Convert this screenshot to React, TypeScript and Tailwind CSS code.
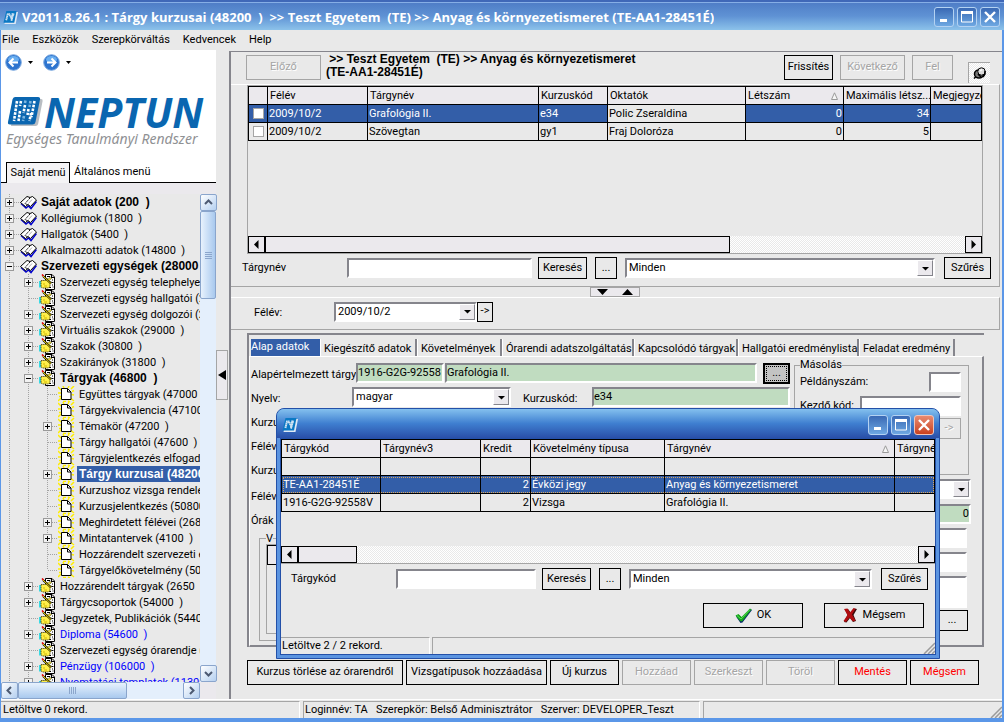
import React, { useState } from "react";

type TreeRow = {
  level: 0 | 1 | 2;
  label: string;
  toggle?: "+" | "-";
  bold?: boolean;
  blue?: boolean;
  selected?: boolean;
  last?: boolean;
};

const treeRows: TreeRow[] = [
  { level: 0, label: "Saját adatok (200  )", toggle: "+", bold: true },
  { level: 0, label: "Kollégiumok (1800  )", toggle: "+" },
  { level: 0, label: "Hallgatók (5400  )", toggle: "+" },
  { level: 0, label: "Alkalmazotti adatok (14800  )", toggle: "+" },
  { level: 0, label: "Szervezeti egységek (28000", toggle: "-", bold: true },
  { level: 1, label: "Szervezeti egység telephelyei", toggle: "+" },
  { level: 1, label: "Szervezeti egység hallgatói (2" },
  { level: 1, label: "Szervezeti egység dolgozói (2", toggle: "+" },
  { level: 1, label: "Virtuális szakok (29000  )", toggle: "+" },
  { level: 1, label: "Szakok (30800  )", toggle: "+" },
  { level: 1, label: "Szakirányok (31800  )", toggle: "+" },
  { level: 1, label: "Tárgyak (46800  )", toggle: "-", bold: true },
  { level: 2, label: "Együttes tárgyak (47000" },
  { level: 2, label: "Tárgyekvivalencia (47100" },
  { level: 2, label: "Témakör (47200  )", toggle: "+" },
  { level: 2, label: "Tárgy hallgatói (47600  )" },
  { level: 2, label: "Tárgyjelentkezés elfogadá" },
  { level: 2, label: "Tárgy kurzusai (48200", toggle: "+", bold: true, selected: true },
  { level: 2, label: "Kurzushoz vizsga rendelé" },
  { level: 2, label: "Kurzusjelentkezés (50800" },
  { level: 2, label: "Meghirdetett félévei (2684", toggle: "+" },
  { level: 2, label: "Mintatantervek (4100  )", toggle: "+" },
  { level: 2, label: "Hozzárendelt szervezeti e" },
  { level: 2, label: "Tárgyelőkövetelmény (50", last: true },
  { level: 1, label: "Hozzárendelt tárgyak (2650  )", toggle: "+" },
  { level: 1, label: "Tárgycsoportok (54000  )", toggle: "+" },
  { level: 1, label: "Jegyzetek, Publikációk (5440" },
  { level: 1, label: "Diploma (54600  )", toggle: "+", blue: true },
  { level: 1, label: "Szervezeti egység órarendje (" },
  { level: 1, label: "Pénzügy (106000  )", toggle: "+", blue: true },
  { level: 1, label: "Nyomtatási templatek (113000", toggle: "+", blue: true },
];

const dither = "bg-[repeating-conic-gradient(#e9e9e9_0_25%,#ffffff_0_50%)] bg-[length:2px_2px]";
const sunken = "border-2 border-t-[#85858c] border-l-[#85858c] border-r-white border-b-white";

/* ---------- drawings ---------- */

function AppIcon({ size }: { size: number }) {
  return (
    <svg width={size} height={size} viewBox="0 0 16 16" aria-hidden="true">
      <path d="M4.500 2h11.500l-2.500 13H1.500z" fill="#dfe9f5" />
      <path d="M3.500 1h11l-2.500 12.500H.5z" fill="#0b79c4" />
      <path d="M3.400 11 5 4.500h1.800l2.200 4.500 1-4.500h2" fill="none" stroke="#cfe2f3" strokeWidth="2" strokeDasharray="1.500 .3" />
      <path d="M9 11.500 11 4" stroke="#cfe2f3" strokeWidth="2" strokeDasharray="1.500 .3" />
    </svg>
  );
}

function LogoMark() {
  return (
    <svg width="38" height="32" viewBox="0 0 38 32" className="shrink-0" aria-hidden="true">
      <path d="M9 3h26q2 0 1.600 2l-4.500 23q-.5 2-2.500 2H5z" fill="#b9bdc2" />
      <path d="M9 1h23q2.500 0 2 2.500L29.500 26q-.5 2.500-3 2.500H4Q1.500 28.500 2 26L6.500 3.500Q7 1 9 1z" fill="#0a66b0" />
      <path
        d="M11 5 8 25M15 5l-1 5M14 15l-1.500 10M19 9l-1.500 8M22.500 13l-1 6M25 17l-1.500 8M28.500 5l-3 16"
        stroke="#fff"
        strokeWidth="2.600"
        strokeDasharray="2.600 1.200"
      />
      <path d="M19.500 4.500 19 7M24.500 5l-1 6M18 20l-1 5" stroke="#7db6e0" strokeWidth="2.600" strokeDasharray="2.600 1.200" />
    </svg>
  );
}

function RoundArrow({ back }: { back?: boolean }) {
  return (
    <svg width="17" height="17" viewBox="0 0 17 17" aria-hidden="true">
      <circle cx="8.500" cy="8.500" r="7.800" fill="#2d74cf" stroke="#7aa7de" />
      <ellipse cx="8.500" cy="5.500" rx="5.500" ry="3.500" fill="#69aef0" />
      <path d={back ? "M13 8.500H5M8.500 4.500l-4 4 4 4" : "M4 8.500h8M8.500 4.500l4 4-4 4"} fill="none" stroke="#fff" strokeWidth="2" />
    </svg>
  );
}

function Tri({ dir }: { dir: "down" | "up" | "left" | "right" }) {
  const paths = {
    down: "M1 3h7L4.500 6.500z",
    up: "M1 6.500h7L4.500 3z",
    left: "M6.500 0v9L2 4.500z",
    right: "M2.500 0v9L7 4.500z",
  };
  return (
    <svg width="9" height="9" viewBox="0 0 9 9" aria-hidden="true">
      <path d={paths[dir]} fill="#000" />
    </svg>
  );
}

function MenuMark() {
  return (
    <svg width="5" height="3" viewBox="0 0 5 3" className="ml-[6px]" aria-hidden="true">
      <path d="M0 0h5L2.500 3z" />
    </svg>
  );
}

function SortMark() {
  return (
    <svg width="7" height="8" viewBox="0 0 7 8" className="mr-[5px] shrink-0" aria-hidden="true">
      <path d="M.5 7.500h6L3.500.8z" fill="#f6f6f6" stroke="#9a9a9a" />
    </svg>
  );
}

function BookIcon() {
  return (
    <svg width="17" height="16" viewBox="0 0 17 16" aria-hidden="true">
      <path d="M1 9.500l5 4.500 2.500-2 2.500 2.500 5.500-7" fill="none" stroke="#0000c8" strokeWidth="1.500" />
      <path d="M.5 8.500 7 2.500l3 1 2.500-1 4 3.500-6 6.500L8 10.500 5.500 12.500z" fill="#fff" stroke="#000" />
      <path d="M10 4 5 9.500l3 1.500" stroke="#000" fill="none" strokeDasharray="1.500 .7" />
      <path d="M12 5.500 8.500 9.500" stroke="#9a9a9a" strokeWidth=".8" />
    </svg>
  );
}

function HandIcon() {
  return (
    <svg width="17" height="16" viewBox="0 0 17 16" aria-hidden="true">
      <path d="M6.500.5h6.500l2.500 2.500v12.500h-9z" fill="#fff" stroke="#000" />
      <path d="M12.500.5v3h3M8 2.500h3M13 6h1M12.500 8.500h2M13 11h1M10 13.500h2M13.500 13h1" stroke="#000" strokeWidth="1.200" fill="none" />
      <path d="M1 7v6.500" stroke="#00d5e0" strokeWidth="1.500" />
      <path d="M2 6.500h4l5-3 1.500 1L9 7.500h3V9.500h-1V13l-2 1H4l-2-1z" fill="#fff04a" stroke="#3d3700" strokeWidth=".8" strokeDasharray="1.500 .6" />
      <path d="M4 10h2M5 12h3" stroke="#d0b800" />
      <path d="M4 2 12 9.500" stroke="#000" strokeWidth="1.800" />
      <path d="M4 2 12 9.500" stroke="#ffe600" strokeWidth="1" />
      <path d="M3 .5 4.500 2" stroke="#e00000" strokeWidth="1.600" />
    </svg>
  );
}

function PageIcon() {
  return (
    <svg width="17" height="16" viewBox="0 0 17 16" aria-hidden="true">
      <path
        d="M0 1l3 3M5 0l1 2M16 0l-3 3M0 7h3M1 10.500h2M0 15l3-3M13.500 8.500 16 9M16 15l-3-2.500M5 15.500h3M10 15l2 1M11 0l-1 2M14 5.500l2-1"
        stroke="#ffee00"
        strokeWidth="1.500"
      />
      <path d="M3.500 2.500h6l3.500 3.500v7.500H3.500z" fill="#fff" stroke="#000" />
      <path d="M9.500 2.500V6H13" fill="none" stroke="#000" />
    </svg>
  );
}

function TreeBranch({ toggle, half, through }: { toggle?: "+" | "-"; half?: boolean; through?: boolean }) {
  return (
    <svg width="19" height="16" viewBox="0 0 19 16" className="shrink-0" aria-hidden="true">
      <path d={half ? "M8.500 0v8" : "M8.500 0v16"} stroke="#a3a3a3" strokeDasharray="1 1" />
      {!through && <path d="M9 8.500h10" stroke="#a3a3a3" strokeDasharray="1 1" />}
      {toggle && (
        <>
          <rect x="4.500" y="4.500" width="8" height="8" fill="#f2f2f2" stroke="#9a9a9a" />
          <path d={toggle === "+" ? "M6 8.500h5M8.500 6v5" : "M6 8.500h5"} stroke="#000" />
        </>
      )}
    </svg>
  );
}

function PinIcon() {
  return (
    <svg width="14" height="14" viewBox="0 0 14 14" aria-hidden="true">
      <ellipse cx="6" cy="8" rx="4.500" ry="4" fill="#777" stroke="#000" strokeWidth="1.500" />
      <circle cx="8.500" cy="5.500" r="3.700" fill="#ddd" stroke="#000" />
      <path d="M3 10.500 1 12.500M5 8l3 3M12 5v3l-2 3" stroke="#000" strokeWidth="1.500" fill="none" />
      <path d="M7 5l2-1.500" stroke="#fff" strokeWidth="1.500" />
    </svg>
  );
}

function CheckIcon() {
  return (
    <svg width="17" height="15" viewBox="0 0 17 15" aria-hidden="true">
      <path d="M1 8.500 4 7l3 3 8.500-9L17 2 7.500 14.500 5.500 15z" fill="#0a2a6a" />
      <path d="M.5 7.500 3.500 6l3 3L15 .5l1.500 1-9.500 12-2-.5z" fill="#14a81c" />
      <path d="M2 7.500 6 11 14.500 2" stroke="#5fe05a" strokeWidth=".9" fill="none" />
    </svg>
  );
}

function CrossIcon() {
  return (
    <svg width="14" height="15" viewBox="0 0 14 15" aria-hidden="true">
      <path d="M2 1.500 5 1l3 4 3.500-4.500L14 1l-3.500 6L13 13l-3 1-3-4-3.500 4.500L1 14l3.500-7z" fill="#3a0a0a" />
      <path d="M1 1l3.500-.5L7 4.500 10.500 0l2 .8L9 6.500l3.500 6-2.500 1L6.500 9.500 3 14l-2.500-1 4-6z" fill="#b00d10" />
    </svg>
  );
}

function Grip() {
  return (
    <svg width="12" height="12" viewBox="0 0 12 12" className="self-end" aria-hidden="true">
      <path d="M1 12 12 1M5 12l7-7M9 12l3-3" stroke="#9b9b9b" strokeWidth="1.500" />
    </svg>
  );
}

/* ---------- controls ---------- */

function PlainButton({
  children,
  className = "",
  disabled,
}: {
  children: React.ReactNode;
  className?: string;
  disabled?: boolean;
}) {
  return (
    <button
      type="button"
      disabled={disabled}
      className={`flex shrink-0 items-center justify-center border whitespace-nowrap ${
        disabled ? "border-[#a5a5a5] text-[#a5a5a5] [text-shadow:1px_1px_0_#fff]" : "border-black"
      } ${className}`}
    >
      {children}
    </button>
  );
}

function Combo({ id, label, value, className = "" }: { id: string; label?: string; value: string; className?: string }) {
  return (
    <div className={`flex h-5 bg-white ${sunken} ${className}`}>
      <select id={id} aria-label={label} className="min-w-0 flex-1 appearance-none bg-white pl-[2px] leading-4 outline-none">
        <option>{value}</option>
      </select>
      <span className="pointer-events-none flex w-4 items-center justify-center border border-t-white border-r-[#85858c] border-b-[#85858c] border-l-white bg-[#ebe9ed]">
        <Tri dir="down" />
      </span>
    </div>
  );
}

function Field({
  id,
  label,
  value = "",
  green,
  className = "",
}: {
  id?: string;
  label?: string;
  value?: string;
  green?: boolean;
  className?: string;
}) {
  return (
    <input
      id={id}
      aria-label={label}
      defaultValue={value}
      readOnly={green}
      className={`h-5 min-w-0 pb-[2px] outline-none ${sunken} ${green ? "bg-[#c0dcc0]" : "bg-white"} ${className}`}
    />
  );
}

function FlatScroll({ thumb }: { thumb: string }) {
  return (
    <div className={`flex h-[17px] shrink-0 ${dither}`}>
      <button type="button" aria-label="Balra" className="flex w-[17px] items-center justify-center border border-black bg-[#ebe9ed]">
        <Tri dir="left" />
      </button>
      <div className={`-ml-px border border-l-2 border-black bg-[#ebe9ed] ${thumb}`} />
      <div className="flex-1" />
      <button type="button" aria-label="Jobbra" className="flex w-[17px] items-center justify-center border border-black bg-[#ebe9ed]">
        <Tri dir="right" />
      </button>
    </div>
  );
}

function XpScrollButton({ d, label }: { d: string; label: string }) {
  return (
    <button
      type="button"
      aria-label={label}
      className="flex size-[17px] shrink-0 items-center justify-center rounded-[2px] border border-[#8aa5cc] bg-linear-to-br from-white to-[#b5d0f0]"
    >
      <svg width="9" height="9" viewBox="0 0 9 9" aria-hidden="true">
        <path d={d} fill="none" stroke="#4d5a72" strokeWidth="2" />
      </svg>
    </button>
  );
}

const captionButton = "flex size-5 items-center justify-center rounded-[3px] border";

function WindowButtons() {
  return (
    <div className="flex gap-[3px]">
      <button type="button" aria-label="Kis méret" className={`${captionButton} border-[#b4d2f2] bg-linear-to-b from-[#3a69b4] to-[#6ea8e2]`}>
        <svg width="12" height="12" aria-hidden="true">
          <path d="M2 9.500h7" stroke="#fff" strokeWidth="3" />
        </svg>
      </button>
      <button type="button" aria-label="Teljes méret" className={`${captionButton} border-[#b4d2f2] bg-linear-to-b from-[#3a69b4] to-[#6ea8e2]`}>
        <svg width="12" height="12" aria-hidden="true">
          <path d="M.5 1v10h11V1" stroke="#fff" fill="none" />
          <path d="M0 1.500h12" stroke="#fff" strokeWidth="3" />
        </svg>
      </button>
    </div>
  );
}

function CloseButton({ red }: { red?: boolean }) {
  return (
    <button
      type="button"
      aria-label="Bezárás"
      className={`${captionButton} bg-linear-to-b ${
        red ? "border-[#f0c4b8] from-[#e88a70] to-[#c8401c]" : "border-[#b4d2f2] from-[#3a69b4] to-[#6ea8e2]"
      }`}
    >
      <svg width="12" height="12" aria-hidden="true">
        <path d="M1 1l10 10M11 1 1 11" stroke="#fff" strokeWidth="2.400" />
      </svg>
    </button>
  );
}

/* ---------- data tables ---------- */

const th = "h-[18px] overflow-hidden border border-black bg-[#ebe9ed] py-0 pr-0 pl-[2px] text-left font-normal whitespace-nowrap";
const td = "h-[18px] overflow-hidden border border-black px-px py-0 whitespace-nowrap";

function CourseTable() {
  const rows = [
    { term: "2009/10/2", name: "Grafológia II.", code: "e34", teacher: "Polic Zseraldina", count: "0", max: "34", on: true },
    { term: "2009/10/2", name: "Szövegtan", code: "gy1", teacher: "Fraj Doloróza", count: "0", max: "5", on: false },
  ];
  return (
    <table className="w-full table-fixed border-collapse leading-4">
      <colgroup>
        <col className="w-[19px]" />
        <col className="w-[100px]" />
        <col className="w-[171px]" />
        <col className="w-[69px]" />
        <col className="w-[138px]" />
        <col className="w-[98px]" />
        <col className="w-[87px]" />
        <col />
      </colgroup>
      <thead>
        <tr>
          <th className={th} aria-label="Kijelölés" />
          <th className={th}>Félév</th>
          <th className={th}>Tárgynév</th>
          <th className={th}>Kurzuskód</th>
          <th className={th}>Oktatók</th>
          <th className={th}>
            <span className="flex items-center justify-between">
              Létszám
              <SortMark />
            </span>
          </th>
          <th className={th}>Maximális létsz...</th>
          <th className={th}>Megjegyzé</th>
        </tr>
      </thead>
      <tbody>
        {rows.map((r) => (
          <tr key={r.code} className={r.on ? "bg-[#335ea8] text-white" : ""}>
            <td className={td}>
              <input
                type="checkbox"
                aria-label={r.name}
                className="mx-auto block size-[11px] appearance-none border border-[#a5a5a5] bg-white"
              />
            </td>
            <td className={td}>{r.term}</td>
            <td className={td}>{r.name}</td>
            <td className={td}>{r.code}</td>
            <td className={`${td} bg-[#e9e9e9] text-black`}>{r.teacher}</td>
            <td className={`${td} text-right`}>{r.count}</td>
            <td className={`${td} text-right`}>{r.max}</td>
            <td className={td} />
          </tr>
        ))}
      </tbody>
    </table>
  );
}

function SubjectTable() {
  const rows = [
    { code: "TE-AA1-28451É", credit: "2", kind: "Évközi jegy", name: "Anyag és környezetismeret", on: true },
    { code: "1916-G2G-92558V", credit: "2", kind: "Vizsga", name: "Grafológia II.", on: false },
  ];
  return (
    <table className="w-full table-fixed border-collapse leading-4">
      <colgroup>
        <col className="w-[99px]" />
        <col className="w-[100px]" />
        <col className="w-[50px]" />
        <col className="w-[134px]" />
        <col className="w-[230px]" />
        <col />
      </colgroup>
      <thead>
        <tr>
          <th className={th}>Tárgykód</th>
          <th className={th}>Tárgynév3</th>
          <th className={th}>Kredit</th>
          <th className={th}>Követelmény típusa</th>
          <th className={th}>
            <span className="flex items-center justify-between">
              Tárgynév
              <SortMark />
            </span>
          </th>
          <th className={th}>Tárgyné</th>
        </tr>
      </thead>
      <tbody>
        <tr>
          <td className={td} />
          <td className={td} />
          <td className={td} />
          <td className={td} />
          <td className={td} />
          <td className={td} />
        </tr>
        {rows.map((r) => (
          <tr
            key={r.code}
            className={r.on ? "bg-[#335ea8] text-white outline-1 -outline-offset-2 outline-dotted outline-[#d8a860]" : ""}
          >
            <td className={td}>{r.code}</td>
            <td className={td} />
            <td className={`${td} text-right`}>{r.credit}</td>
            <td className={td}>{r.kind}</td>
            <td className={td}>{r.name}</td>
            <td className={td} />
          </tr>
        ))}
      </tbody>
    </table>
  );
}

/* ---------- panels ---------- */

function Tree() {
  return (
    <div className="flex min-h-0 flex-1 flex-col pt-[11px]">
      <div className="flex min-h-0 flex-1 bg-[#e9e9e9]">
        <ul className="min-w-0 flex-1 overflow-hidden">
          {treeRows.map((r) => (
            <li key={r.label} className="flex h-4 items-center overflow-hidden">
              {r.level > 0 && <TreeBranch through />}
              {r.level > 1 && <TreeBranch through />}
              <TreeBranch toggle={r.toggle} half={r.last} />
              <span className="w-[19px] shrink-0">
                {r.level === 0 ? <BookIcon /> : r.level === 1 ? <HandIcon /> : <PageIcon />}
              </span>
              <span
                className={`h-4 pl-[2px] whitespace-pre ${
                  r.bold ? "font-['Liberation_Sans',sans-serif] text-xs leading-4 font-bold" : "leading-[18px]"
                } ${r.blue ? "text-[#0000ff]" : ""} ${r.selected ? "bg-[#335ea8] text-white" : ""}`}
              >
                {r.label}
              </span>
            </li>
          ))}
        </ul>
        <div className="flex w-4 shrink-0 flex-col items-center bg-[#e4effc]">
          <XpScrollButton label="Fel" d="M1 6l3.500-3.500L8 6" />
          <div className="flex h-[88px] w-4 flex-col items-center justify-center gap-[1px] rounded-[2px] border border-[#8aa5cc] bg-linear-to-r from-[#e8f2fd] to-[#a9c9ee]">
            <span className="h-px w-[7px] bg-[#8ba6cc]" />
            <span className="h-px w-[7px] bg-[#8ba6cc]" />
            <span className="h-px w-[7px] bg-[#8ba6cc]" />
            <span className="h-px w-[7px] bg-[#8ba6cc]" />
          </div>
          <div className="flex-1" />
          <XpScrollButton label="Le" d="M1 3l3.500 3.500L8 3" />
        </div>
      </div>
      <div className="mr-4 flex h-[17px] shrink-0 bg-[#e4effc]">
        <XpScrollButton label="Balra" d="M6 1 2.500 4.500 6 8" />
        <div className="flex w-[109px] items-center justify-center gap-[1px] rounded-[2px] border border-[#8aa5cc] bg-linear-to-b from-[#e8f2fd] to-[#a9c9ee]">
          <span className="h-[7px] w-px bg-[#8ba6cc]" />
          <span className="h-[7px] w-px bg-[#8ba6cc]" />
          <span className="h-[7px] w-px bg-[#8ba6cc]" />
          <span className="h-[7px] w-px bg-[#8ba6cc]" />
        </div>
        <div className="flex-1" />
        <XpScrollButton label="Jobbra" d="M3 1l3.500 3.500L3 8" />
      </div>
    </div>
  );
}

function Sidebar() {
  return (
    <aside className="flex w-[215px] shrink-0 flex-col bg-[#ebe9ed]">
      <div className="bg-white">
        <div className="flex h-6 items-center pl-1">
          <button type="button" aria-label="Vissza">
            <RoundArrow back />
          </button>
          <MenuMark />
          <button type="button" aria-label="Előre" className="ml-[10px]">
            <RoundArrow />
          </button>
          <MenuMark />
        </div>
        <div className="mt-5 flex h-9 items-center pl-[5px]">
          <LogoMark />
          <span className="font-['Open_Sans',sans-serif] text-[41px] leading-9 font-bold text-[#0a66b0] italic">NEPTUN</span>
        </div>
        <div className="mt-px h-[31px] pl-[5px] font-['Noto_Sans',sans-serif] text-sm leading-4 whitespace-nowrap text-[#8f9194] italic">
          Egységes Tanulmányi Rendszer
        </div>
        <div className="flex h-[21px]" role="tablist">
          <span className="w-[5px] border-b border-black" />
          <button
            type="button"
            role="tab"
            aria-selected="true"
            className="w-16 border border-b-0 border-black bg-[#f4f3f5] whitespace-nowrap"
          >
            Saját menü
          </button>
          <button type="button" role="tab" aria-selected="false" className="flex-1 border-b border-black pl-1 text-left">
            Általános menü
          </button>
        </div>
      </div>
      <Tree />
    </aside>
  );
}

function CourseListPanel() {
  return (
    <section className="mr-[2px] flex h-[203px] shrink-0 flex-col border-t border-r border-b border-t-white border-r-[#a5a5a5] border-b-[#a5a5a5]">
      <div className="mr-4 ml-4 flex h-[169px] flex-col border border-[#a5a5a5]">
        <div className="flex-1 overflow-hidden">
          <CourseTable />
        </div>
        <FlatScroll thumb="w-[466px]" />
      </div>
      <div className="mt-[3px] flex h-[22px] items-center pr-2 pl-[11px]">
        <label htmlFor="course-search" className="w-[105px] shrink-0">
          Tárgynév
        </label>
        <Field id="course-search" className="w-[185px]" />
        <PlainButton className="ml-[6px] h-[22px] w-[49px]">Keresés</PlainButton>
        <PlainButton className="ml-2 h-[22px] w-[22px]">...</PlainButton>
        <Combo id="course-filter" label="Szűrő" value="Minden" className="ml-2 flex-1" />
        <PlainButton className="ml-[9px] h-[22px] w-[47px]">Szűrés</PlainButton>
      </div>
    </section>
  );
}

const tabs = [
  { label: "Kiegészítő adatok", width: "w-[97px]" },
  { label: "Követelmények", width: "w-[85px]" },
  { label: "Órarendi adatszolgáltatás", width: "w-[132px]" },
  { label: "Kapcsolódó tárgyak", width: "w-[104px]" },
  { label: "Hallgatói eredménylista", width: "w-[121px]" },
  { label: "Feladat eredmény", width: "w-[96px]" },
];

function DetailTabs() {
  return (
    <section className="mt-[3px] mr-[18px] ml-4 flex min-h-0 flex-1 flex-col border-t-2 border-l-2 border-t-[#85858c] border-l-[#85858c]">
      <div className="flex h-[21px] items-end pl-[2px]" role="tablist">
        <button type="button" role="tab" aria-selected="true" className="h-[17px] w-[69px] shrink-0 bg-[#335ea8] text-left text-white">
          Alap adatok
        </button>
        {tabs.map((t) => (
          <button
            key={t.label}
            type="button"
            role="tab"
            aria-selected="false"
            className={`h-[17px] shrink-0 border-r-2 border-l border-r-[#85858c] border-l-white pl-[3px] text-left leading-5 whitespace-nowrap ${t.width}`}
          >
            {t.label}
          </button>
        ))}
      </div>
      <div className="flex min-h-0 flex-1 gap-1 border-t border-r-2 border-b-2 border-l border-t-white border-r-[#85858c] border-b-[#85858c] border-l-white pl-px">
        <div className="flex min-w-0 flex-1 flex-col pt-[4px]">
          <div className="flex h-6 items-center">
            <label htmlFor="default-code" className="w-[105px] shrink-0 pt-1 whitespace-nowrap">
              Alapértelmezett tárgy:
            </label>
            <Field id="default-code" green value="1916-G2G-92558" className="w-[88px]" />
            <Field label="Alapértelmezett tárgy neve" green value="Grafológia II." className="ml-px flex-1" />
            <button
              type="button"
              className="ml-[6px] flex h-[21px] w-[27px] items-center justify-center border-2 border-black bg-[#c3c3c3] p-px"
            >
              <span className="flex h-full w-full items-center justify-center border border-dotted border-black leading-3">...</span>
            </button>
          </div>
          <div className="flex h-6 items-center">
            <label htmlFor="language" className="w-[101px] shrink-0 pt-1">
              Nyelv:
            </label>
            <Combo id="language" value="magyar" className="w-[159px]" />
            <label htmlFor="course-code" className="w-[81px] shrink-0 pt-1 pl-3">
              Kurzuskód:
            </label>
            <Field id="course-code" green value="e34" className="flex-1" />
          </div>
          <div className="flex h-6 items-center pt-1">Kurzu</div>
          <div className="flex h-6 items-center pt-1">Félév</div>
          <div className="flex h-6 items-center pt-1">Kurzu</div>
          <div className="flex h-7 items-center pt-1">Félév</div>
          <div className="flex h-5 items-center pt-1">Órák</div>
          <fieldset className="mt-1 mb-1 ml-2 min-h-0 flex-1 border border-[#a5a5a5] px-[6px]">
            <legend className="leading-[11px]">V</legend>
            <div className="h-[90px] border border-[#a5a5a5]">
              <div className="h-5 border border-black bg-[#ebe9ed]" />
            </div>
          </fieldset>
        </div>
        <div className="flex w-[188px] shrink-0 flex-col items-end pt-[2px] pr-[11px]">
          <fieldset className="mr-[2px] h-[116px] self-stretch border border-[#a5a5a5] pr-[7px] pl-[5px]">
            <legend className="leading-3">Másolás</legend>
            <div className="flex h-[22px] items-center justify-between">
              <label htmlFor="copies">Példányszám:</label>
              <Field id="copies" className="w-8" />
            </div>
            <div className="mt-[2px] flex h-[22px] items-center justify-between">
              <label htmlFor="start-code">Kezdő kód:</label>
              <Field id="start-code" className="w-[101px]" />
            </div>
            <div className="mt-[1px] flex justify-end">
              <PlainButton disabled className="h-[21px] w-6">
                -&gt;
              </PlainButton>
            </div>
          </fieldset>
          <Combo id="detail-type" label="Típus" value="" className="mt-1 w-20" />
          <Field label="Létszám" green value="0" className="mt-[5px] w-20 text-right" />
          <Field label="Maximum" className="mt-1 mr-1 w-20" />
          <Field label="Minimum" className="mt-1 mr-1 w-20" />
          <textarea aria-label="Megjegyzés" className={`mt-1 mr-1 block h-8 w-20 resize-none bg-white ${sunken}`} />
          <PlainButton className="mt-[2px] mr-[3px] h-[21px] w-8">...</PlainButton>
        </div>
      </div>
    </section>
  );
}

const actions = [
  { label: "Kurzus törlése az órarendről", width: "w-[156px]", disabled: false, tone: "" },
  { label: "Vizsgatípusok hozzáadása", width: "w-[141px]", disabled: false, tone: "" },
  { label: "Új kurzus", width: "w-[69px]", disabled: false, tone: "" },
  { label: "Hozzáad", width: "w-[69px]", disabled: true, tone: "" },
  { label: "Szerkeszt", width: "w-[69px]", disabled: true, tone: "" },
  { label: "Töröl", width: "w-[69px]", disabled: true, tone: "" },
  { label: "Mentés", width: "w-[69px]", disabled: false, tone: "text-[#ff0000]" },
  { label: "Mégsem", width: "w-[69px]", disabled: false, tone: "text-[#ff0000]" },
];

function Workspace() {
  return (
    <main className="mt-px flex min-w-0 flex-1 flex-col border-t border-l-2 border-[#85858c]">
      <div className="flex h-8 shrink-0 pt-[3px] pl-[15px]">
        <PlainButton disabled className="h-[25px] w-[75px]">
          Előző
        </PlainButton>
        <h1 className="-mt-[2px] ml-[5px] min-w-0 flex-1 font-['Liberation_Sans',sans-serif] text-xs leading-[13px] font-bold whitespace-pre">
          {" >> Teszt Egyetem  (TE) >> Anyag és környezetismeret\n(TE-AA1-28451É)"}
        </h1>
        <PlainButton className="h-[25px] w-[49px]">Frissítés</PlainButton>
        <PlainButton disabled className="ml-[7px] h-[25px] w-[65px]">
          Következő
        </PlainButton>
        <PlainButton disabled className="ml-[7px] h-[25px] w-[41px]">
          Fel
        </PlainButton>
        <button
          type="button"
          aria-label="Rögzítés"
          className={`mt-[7px] mr-3 ml-[15px] flex h-[21px] w-[22px] items-center justify-center border-t border-l border-[#a5a5a5] ${dither}`}
        >
          <PinIcon />
        </button>
      </div>
      <CourseListPanel />
      <div className="flex h-[10px] shrink-0 justify-center pr-[4px]">
        <button
          type="button"
          aria-label="Panel mérete"
          className="flex w-[50px] items-center justify-between border border-[#a5a5a5] bg-[#ebe9ed] px-[6px]"
        >
          <svg width="11" height="6" viewBox="0 0 11 6" aria-hidden="true">
            <path d="M0 0h11L5.500 6z" />
          </svg>
          <svg width="11" height="6" viewBox="0 0 11 6" aria-hidden="true">
            <path d="M0 6h11L5.500 0z" />
          </svg>
        </button>
      </div>
      <div className="mr-[2px] flex h-[33px] shrink-0 items-center border-t border-r border-b border-t-white border-r-[#a5a5a5] border-b-[#a5a5a5] pb-1 pl-[23px]">
        <label htmlFor="term" className="w-20 shrink-0 pt-1">
          Félév:
        </label>
        <Combo id="term" value="2009/10/2" className="w-[143px]" />
        <PlainButton className="h-5 w-4">-&gt;</PlainButton>
      </div>
      <DetailTabs />
      <div className="mt-[13px] mb-[14px] ml-4 flex h-[25px] shrink-0 gap-[3px]">
        {actions.map((a) => (
          <PlainButton key={a.label} disabled={a.disabled} className={`h-[25px] ${a.width} ${a.tone}`}>
            {a.label}
          </PlainButton>
        ))}
      </div>
    </main>
  );
}

function PickerDialog() {
  return (
    <div
      role="dialog"
      aria-label="Tárgyválasztó"
      className="absolute top-[408px] left-[276px] flex h-[251px] w-[664px] flex-col rounded-t-lg border border-[#2350a8] bg-[#5b94e0] px-[3px] pb-[3px]"
    >
      <div className="-mx-[3px] flex h-[29px] shrink-0 items-center justify-between rounded-t-[7px] bg-linear-to-b from-[#84c0ee] via-[#3f7fd0] to-[#2a4fa8] pt-[2px] pr-[5px] pl-[5px]">
        <AppIcon size={16} />
        <div className="flex gap-[3px]">
          <WindowButtons />
          <CloseButton red />
        </div>
      </div>
      <div className="flex min-h-0 flex-1 flex-col border border-[#2350a8] bg-[#e9e9e9]">
        <div className="flex h-[125px] flex-col border-b border-[#a5a5a5]">
          <div className="flex-1 overflow-hidden">
            <SubjectTable />
          </div>
          <FlatScroll thumb="w-[60px]" />
        </div>
        <div className="mt-1 flex h-[22px] items-center pr-[7px] pl-[10px]">
          <label htmlFor="subject-search" className="w-[105px] shrink-0">
            Tárgykód
          </label>
          <Field id="subject-search" className="w-[140px]" />
          <PlainButton className="ml-[6px] h-[22px] w-[49px]">Keresés</PlainButton>
          <PlainButton className="ml-2 h-[22px] w-[22px]">...</PlainButton>
          <Combo id="subject-filter" label="Szűrő" value="Minden" className="ml-2 flex-1" />
          <PlainButton className="ml-[9px] h-[22px] w-[47px]">Szűrés</PlainButton>
        </div>
        <div className="mt-[13px] flex justify-end gap-[21px] pr-[11px]">
          <PlainButton className="h-[25px] w-[100px] gap-[5px]">
            <CheckIcon />
            OK
          </PlainButton>
          <PlainButton className="h-[25px] w-[100px] gap-[6px]">
            <CrossIcon />
            Mégsem
          </PlainButton>
        </div>
        <div className="mt-auto flex h-[17px] gap-[2px] leading-4">
          <div className="w-[149px] border-t border-r border-t-[#a5a5a5] border-r-white pl-[1px]">Letöltve 2 / 2 rekord.</div>
          <div className="flex flex-1 justify-end border-t border-l border-[#a5a5a5]">
            <Grip />
          </div>
        </div>
      </div>
    </div>
  );
}

export default function App() {
  const [menus] = useState(["File", "Eszközök", "Szerepkörváltás", "Kedvencek", "Help"]);
  return (
    <div className="relative flex h-screen flex-col overflow-hidden bg-[#e9e9e9] font-[Roboto,'Liberation_Sans',sans-serif] text-[11px] text-black">
      <header className="flex h-[30px] shrink-0 items-center justify-between border-t-2 border-[#4068b8] bg-linear-to-b from-[#4e7cc6] via-[#5f92d4] to-[#8cc2ea] pr-1 pl-[3px] shadow-[inset_0_1px_0_#86aee6]">
        <div className="flex min-w-0 items-center gap-1 pt-[2px] text-white">
          <AppIcon size={15} />
          <span className="overflow-hidden font-['Open_Sans',sans-serif] text-[13px] leading-5 font-bold whitespace-pre">
            {"V2011.8.26.1 : Tárgy kurzusai (48200  )  >> Teszt Egyetem  (TE) >> Anyag és környezetismeret (TE-AA1-28451É)"}
          </span>
        </div>
        <div className="flex shrink-0 gap-[3px] pt-[2px]">
          <WindowButtons />
          <CloseButton />
        </div>
      </header>
      <div className="flex min-h-0 flex-1 flex-col border-r-2 border-b-4 border-l border-[#5b97e8]">
        <nav className="flex h-5 shrink-0 items-center gap-[13px] pl-px">
          {menus.map((m) => (
            <button key={m} type="button">
              {m}
            </button>
          ))}
        </nav>
        <div className="flex min-h-0 flex-1">
          <Sidebar />
          <div className="flex w-[13px] shrink-0 items-center">
            <button
              type="button"
              aria-label="Oldalsáv elrejtése"
              className="flex h-[50px] w-3 items-center justify-center border border-[#a5a5a5] bg-[#ebe9ed]"
            >
              <svg width="8" height="10" viewBox="0 0 8 10" aria-hidden="true">
                <path d="M8 0v10L0 5z" />
              </svg>
            </button>
          </div>
          <Workspace />
        </div>
        <footer className="flex h-[19px] shrink-0 gap-[3px] border-t border-white pt-px leading-4 whitespace-pre">
          <div className="w-[299px] border-t border-r border-t-[#a5a5a5] border-r-white pl-[2px]">Letöltve 0 rekord.</div>
          <div className="w-[397px] border-t border-r border-l border-t-[#a5a5a5] border-r-white border-l-[#a5a5a5] pl-px">
            {"Loginnév: TA   Szerepkör: Belső Adminisztrátor   Szerver: DEVELOPER_Teszt"}
          </div>
          <div className="flex flex-1 justify-end border-t border-l border-[#a5a5a5]">
            <Grip />
          </div>
        </footer>
      </div>
      <PickerDialog />
    </div>
  );
}
